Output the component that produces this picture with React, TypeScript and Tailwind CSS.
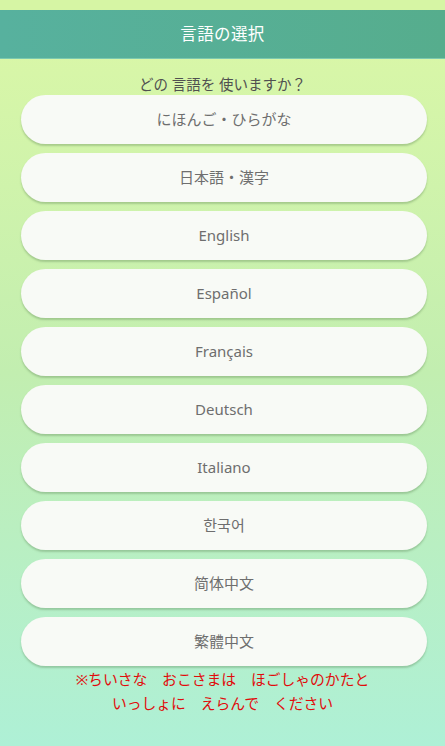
import React from 'react';

const languages = [
  'にほんご・ひらがな',
  '日本語・漢字',
  'English',
  'Español',
  'Français',
  'Deutsch',
  'Italiano',
  '한국어',
  '简体中文',
  '繁體中文',
];

const font = { fontFamily: '"Noto Sans", "Noto Sans CJK JP", sans-serif' };

export default function App() {
  return (
    <div
      className="w-[445px] h-[746px] overflow-hidden flex flex-col bg-gradient-to-b from-[#dcf8a6] via-[#c2eeb0] to-[#aef0d6]"
      style={font}
    >
      <div className="h-[10px] bg-[#d6f5a4]" />
      <header className="h-[49px] bg-gradient-to-r from-[#57b19e] to-[#56ad8d] flex items-center justify-center border-b border-[#7cc9b0]">
        <h1 className="text-white text-[16.5px] tracking-wide">言語の選択</h1>
      </header>
      <p className="mt-[15px] text-center text-[14.5px] leading-[20px] text-[#505050]">
        どの 言語を 使いますか？
      </p>
      <div className="mt-[1px] flex flex-col gap-[9px] pl-[21px] pr-[18px]">
        {languages.map((lang) => (
          <button
            key={lang}
            className="h-[49px] w-full rounded-full bg-[#f8faf6] text-[#6e6e6e] text-[15px] shadow-[0_2px_2px_rgba(90,130,80,0.35)]"
          >
            {lang}
          </button>
        ))}
      </div>
      <div className="mt-[1px] text-center text-[#e00c0c] text-[14.8px] leading-[24px]">
        <p>※ちいさな　おこさまは　ほごしゃのかたと</p>
        <p>いっしょに　えらんで　ください</p>
      </div>
    </div>
  );
}
